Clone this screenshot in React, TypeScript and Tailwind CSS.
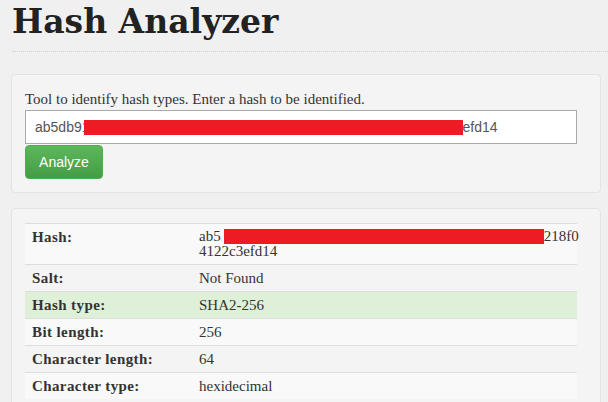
import React from "react";

const serif = "font-['Liberation_Serif',Georgia,serif]";
const sans = "font-['Liberation_Sans',Arial,sans-serif]";

function Row({ label, children, className = "" }: { label: string; children: React.ReactNode; className?: string }) {
  return (
    <div className={`flex border-t border-[#dddddd] ${className}`}>
      <div className="w-[174px] shrink-0 pl-[7px] pt-[5px] pb-[5px] font-bold text-[#333] leading-[16px] tracking-[0.4px]">{label}</div>
      <div className="flex-1 pt-[5px] pb-[5px] leading-[16px] text-[#333]">{children}</div>
    </div>
  );
}

export default function App() {
  return (
    <div className={`w-[608px] h-[402px] overflow-hidden bg-[#f0f0f0] ${serif} text-[15px]`}>
      <div className="pl-[12px] pr-0">
        <h1 className="font-['DejaVu_Serif',Georgia,serif] text-[33px] font-bold leading-[42px] text-[#222] pt-[1px]">Hash Analyzer</h1>
        <div className="mt-[8px] border-t border-dotted border-[#cfcfcf]" />
      </div>
      <div className="mt-[22px] ml-[11px] mr-[7px] bg-[#f4f4f4] border border-[#e3e3e3] rounded-[4px] px-[13px] pt-[15px] pb-[13px]">
        <div className="text-[#333] leading-[18px]">Tool to identify hash types. Enter a hash to be identified.</div>
        <div className="mt-[2px] mr-[10px] h-[34px] bg-white border border-[#a9a9a9] flex items-center px-[9px] text-[14px] text-[#555]">
          <span className={sans}>ab5db91</span>
          <span className="inline-block ml-[-6px] w-[379px] h-[15px] bg-[#ed1c24]" />
          <span className={sans}>efd14</span>
        </div>
        <button className={`mt-[1px] h-[34px] w-[78px] rounded-[4px] border border-[#4cae4c] bg-gradient-to-b from-[#5cb85c] to-[#449d44] text-white text-[14px] ${sans}`}>
          Analyze
        </button>
      </div>
      <div className="mt-[15px] ml-[11px] mr-[7px] bg-[#f4f4f4] border border-[#e3e3e3] rounded-[4px] px-[13px] pt-[14px] h-[200px]">
        <div className="mr-[10px]">
          <Row label="Hash:" className="bg-[#f9f9f9]">
            <div className="leading-[15px]">
              <div className="flex items-center">
                <span>ab5</span>
                <span className="inline-block ml-[3px] w-[320px] h-[15px] bg-[#ed1c24]" />
                <span>218f0</span>
              </div>
              <div>4122c3efd14</div>
            </div>
          </Row>
          <Row label="Salt:">Not Found</Row>
          <Row label="Hash type:" className="bg-[#dff0d8]">SHA2-256</Row>
          <Row label="Bit length:" className="bg-[#f9f9f9]">256</Row>
          <Row label="Character length:">64</Row>
          <Row label="Character type:" className="bg-[#f9f9f9]">hexidecimal</Row>
        </div>
      </div>
    </div>
  );
}
